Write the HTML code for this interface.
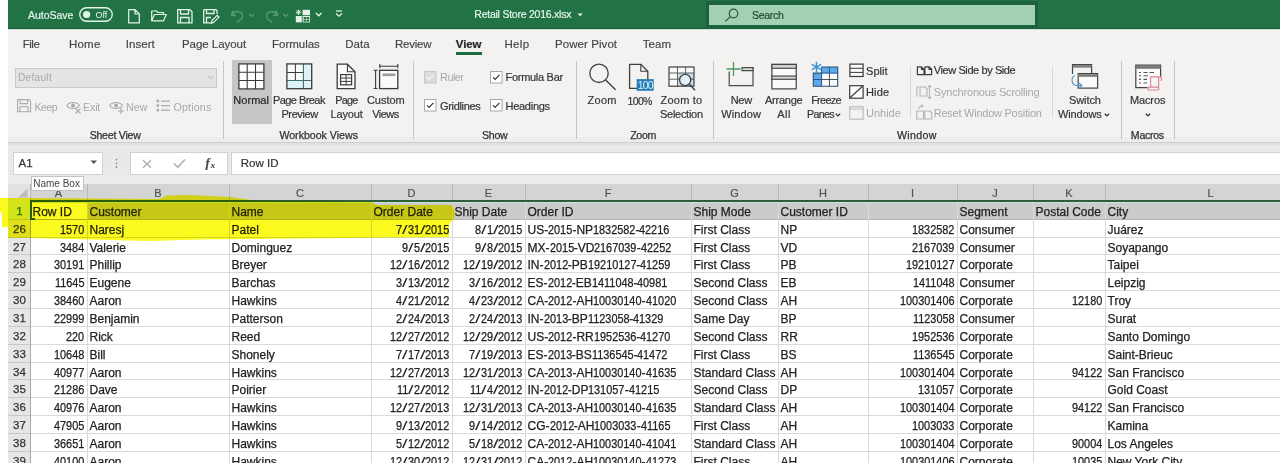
<!DOCTYPE html><html><head><meta charset="utf-8"><style>
html,body{margin:0;padding:0;}
body{width:1280px;height:463px;overflow:hidden;position:relative;background:#fff;font-family:"Liberation Sans", sans-serif;}
.t{position:absolute;white-space:pre;font-family:"Liberation Sans", sans-serif;}
svg{overflow:visible}
.d{display:inline-block;transform:scaleX(0.908);transform-origin:0 0;text-align:left}
.sl{display:inline-block;width:5.6px;transform:scaleX(1.65) scaleY(1.12);transform-origin:0 70%;text-align:left;-webkit-text-stroke:0 !important}
</style></head><body>
<div style="position:absolute;left:8px;top:0px;width:1272px;height:30px;background:#217346;"></div>
<div class="t" style="left:28.10px;top:10.11px;font-size:10.5px;line-height:10.5px;color:#e4f3e8;font-weight:normal;letter-spacing:-0.05px;-webkit-text-stroke:0.2px #e4f3e8;">AutoSave</div>
<svg style="position:absolute;left:79px;top:7px;" width="34" height="15" viewBox="0 0 34 15"><rect x="0.75" y="0.75" width="32.5" height="13.5" rx="6.75" fill="none" stroke="#e4f3e8" stroke-width="1.3"/><circle cx="7.6" cy="7.5" r="3.6" fill="#e4f3e8"/></svg>
<div class="t" style="left:95.50px;top:10.68px;font-size:9px;line-height:9px;color:#e4f3e8;font-weight:normal;">Off</div>
<svg style="position:absolute;left:128px;top:9px;" width="12" height="15" viewBox="0 0 12 15"><path d="M0.7 0.7 H7 L11.3 5 V13.8 H0.7 Z M7 0.7 V5 H11.3" fill="none" stroke="#e4f3e8" stroke-width="1.2"/></svg>
<svg style="position:absolute;left:151px;top:10px;" width="16" height="12" viewBox="0 0 16 12"><path d="M0.7 10.8 V1 H5.5 L7 2.5 H12.5 V4.5 M0.7 10.8 L3.5 4.5 H15.3 L12.5 10.8 Z" fill="none" stroke="#e4f3e8" stroke-width="1.2" stroke-linejoin="round"/></svg>
<svg style="position:absolute;left:177px;top:9px;" width="16" height="15" viewBox="0 0 16 15"><path d="M0.7 0.7 H13 L15 2.7 V13.8 H0.7 Z M3.5 0.7 V5 H11.5 V0.7 M3.5 13.8 V8.5 H12 V13.8" fill="none" stroke="#e4f3e8" stroke-width="1.3"/></svg>
<svg style="position:absolute;left:203px;top:9px;" width="16" height="15" viewBox="0 0 16 15"><path d="M0.7 0.7 H13 L14 1.7 V5 M8 13.8 H0.7 V0.7 M3.5 0.7 V4.5 H11 V0.7 M3.5 13.8 V8.5 H8" fill="none" stroke="#e4f3e8" stroke-width="1.3"/><path d="M8.5 14.3 L9 11.5 L14.2 6.3 L16 8.1 L10.8 13.3 Z" fill="none" stroke="#e4f3e8" stroke-width="1.2"/></svg>
<svg style="position:absolute;left:230px;top:9px;" width="14" height="14" viewBox="0 0 14 14"><path d="M1 6 L3.5 1.5 M1 6 L6 6.5 M1.5 5.5 C4 2.5 9.5 1.5 12 4.5 C13.5 7 12 10 9.5 11.5 L7 13.5" fill="none" stroke="#5f9b78" stroke-width="1.3"/></svg>
<svg style="position:absolute;left:248px;top:13px;" width="8" height="5" viewBox="0 0 8 5"><path d="M1 1 L3.5 3.5 L6 1" fill="none" stroke="#5f9b78" stroke-width="1.1"/></svg>
<svg style="position:absolute;left:265px;top:9px;" width="14" height="14" viewBox="0 0 14 14"><path d="M13 6 L10.5 1.5 M13 6 L8 6.5 M12.5 5.5 C10 2.5 4.5 1.5 2 4.5 C0.5 7 2 10 4.5 11.5 L7 13.5" fill="none" stroke="#5f9b78" stroke-width="1.3"/></svg>
<svg style="position:absolute;left:282px;top:13px;" width="8" height="5" viewBox="0 0 8 5"><path d="M1 1 L3.5 3.5 L6 1" fill="none" stroke="#5f9b78" stroke-width="1.1"/></svg>
<svg style="position:absolute;left:295px;top:9px;" width="16" height="14" viewBox="0 0 16 14"><rect x="7.6" y="0.8" width="7.4" height="5.4" fill="#e4f3e8"/><rect x="0.8" y="7" width="6" height="6.4" fill="#e4f3e8"/><rect x="7.6" y="7" width="7.4" height="6.4" fill="#e4f3e8"/><rect x="8.6" y="8" width="2.6" height="2.1" fill="#217346"/><rect x="11.6" y="8" width="2.6" height="2.1" fill="#217346"/><rect x="8.6" y="10.6" width="2.6" height="2.1" fill="#217346"/><rect x="11.6" y="10.6" width="2.6" height="2.1" fill="#217346"/><path d="M3.5 0.5 V6 M0.8 3.2 H6.2 M1.5 1.2 L5.5 5.2 M5.5 1.2 L1.5 5.2" stroke="#e4f3e8" stroke-width="0.9"/></svg>
<svg style="position:absolute;left:315px;top:12px;" width="8" height="5" viewBox="0 0 8 5"><path d="M1 1 L3.8 3.8 L6.6 1" fill="none" stroke="#e4f3e8" stroke-width="1.3"/></svg>
<svg style="position:absolute;left:335px;top:10px;" width="8" height="9" viewBox="0 0 8 9"><path d="M1 1 H7" stroke="#e4f3e8" stroke-width="1.2"/><path d="M1 3.5 L4 6.3 L7 3.5" fill="none" stroke="#e4f3e8" stroke-width="1.2"/></svg>
<div class="t" style="left:474.30px;top:9.41px;font-size:10.5px;line-height:10.5px;color:#e4f3e8;font-weight:normal;letter-spacing:-0.24px;-webkit-text-stroke:0.2px #e4f3e8;">Retail Store 2016.xlsx</div>
<svg style="position:absolute;left:577px;top:13px;" width="7" height="4" viewBox="0 0 7 4"><path d="M0.5 0.5 H5.8 L3.15 3.3 Z" fill="#e4f3e8"/></svg>
<div style="position:absolute;left:8px;top:28px;width:1272px;height:1px;background:#1a5a36;"></div>
<div style="position:absolute;left:8px;top:29px;width:1272px;height:1px;background:#cfe3d6;"></div>
<div style="position:absolute;left:706px;top:1px;width:332px;height:28px;background:#1c623a;"></div>
<div style="position:absolute;left:709px;top:5px;width:326px;height:20px;background:#a3d0b4;"></div>
<svg style="position:absolute;left:724px;top:8px;" width="16" height="14" viewBox="0 0 16 14"><circle cx="9.5" cy="5.5" r="4.3" fill="none" stroke="#2a5a3e" stroke-width="1.2"/><path d="M6.4 8.6 L1.3 13.4" stroke="#2a5a3e" stroke-width="1.3"/></svg>
<div class="t" style="left:752.00px;top:9.86px;font-size:10.5px;line-height:10.5px;color:#1a4a2f;font-weight:normal;letter-spacing:-0.31px;-webkit-text-stroke:0.2px #1a4a2f;">Search</div>
<div style="position:absolute;left:8px;top:30px;width:1272px;height:112px;background:#f3f2f1;"></div>
<div style="position:absolute;left:8px;top:137px;width:1272px;height:5px;background:#efeeed;"></div>
<div style="position:absolute;left:8px;top:142px;width:1272px;height:1px;background:#cdcdcd;"></div>
<div style="position:absolute;left:8px;top:143px;width:1272px;height:2px;background:#e2e2e2;"></div>
<div class="t" style="left:22.75px;top:38.77px;font-size:11.5px;line-height:11.5px;color:#444;font-weight:normal;letter-spacing:-0.49px;-webkit-text-stroke:0.15px #444;">File</div>
<div class="t" style="left:69.00px;top:38.77px;font-size:11.5px;line-height:11.5px;color:#444;font-weight:normal;letter-spacing:0.21px;-webkit-text-stroke:0.15px #444;">Home</div>
<div class="t" style="left:125.75px;top:38.77px;font-size:11.5px;line-height:11.5px;color:#444;font-weight:normal;letter-spacing:0.06px;-webkit-text-stroke:0.15px #444;">Insert</div>
<div class="t" style="left:182.00px;top:38.77px;font-size:11.5px;line-height:11.5px;color:#444;font-weight:normal;letter-spacing:-0.05px;-webkit-text-stroke:0.15px #444;">Page Layout</div>
<div class="t" style="left:272.00px;top:38.77px;font-size:11.5px;line-height:11.5px;color:#444;font-weight:normal;letter-spacing:-0.02px;-webkit-text-stroke:0.15px #444;">Formulas</div>
<div class="t" style="left:345.25px;top:38.77px;font-size:11.5px;line-height:11.5px;color:#444;font-weight:normal;letter-spacing:0.00px;-webkit-text-stroke:0.15px #444;">Data</div>
<div class="t" style="left:395.00px;top:38.77px;font-size:11.5px;line-height:11.5px;color:#444;font-weight:normal;letter-spacing:-0.23px;-webkit-text-stroke:0.15px #444;">Review</div>
<div class="t" style="left:504.50px;top:38.77px;font-size:11.5px;line-height:11.5px;color:#444;font-weight:normal;letter-spacing:0.30px;-webkit-text-stroke:0.15px #444;">Help</div>
<div class="t" style="left:555.00px;top:38.77px;font-size:11.5px;line-height:11.5px;color:#444;font-weight:normal;letter-spacing:0.07px;-webkit-text-stroke:0.15px #444;">Power Pivot</div>
<div class="t" style="left:642.75px;top:38.77px;font-size:11.5px;line-height:11.5px;color:#444;font-weight:normal;letter-spacing:0.06px;-webkit-text-stroke:0.15px #444;">Team</div>
<div class="t" style="left:455.75px;top:38.77px;font-size:11.5px;line-height:11.5px;color:#262626;font-weight:bold;letter-spacing:-0.07px;-webkit-text-stroke:0.2px #262626;">View</div>
<div style="position:absolute;left:456px;top:52px;width:26px;height:3px;background:#1d6b41;"></div>
<div style="position:absolute;left:223px;top:61px;width:1px;height:78px;background:#c8c6c4;"></div>
<div style="position:absolute;left:413px;top:61px;width:1px;height:78px;background:#c8c6c4;"></div>
<div style="position:absolute;left:576px;top:61px;width:1px;height:78px;background:#c8c6c4;"></div>
<div style="position:absolute;left:713px;top:61px;width:1px;height:78px;background:#c8c6c4;"></div>
<div style="position:absolute;left:1121px;top:61px;width:1px;height:78px;background:#c8c6c4;"></div>
<div style="position:absolute;left:1174px;top:61px;width:1px;height:78px;background:#c8c6c4;"></div>
<div style="position:absolute;left:910px;top:66px;width:1px;height:52px;background:#dcdad8;"></div>
<div style="position:absolute;left:1052px;top:66px;width:1px;height:52px;background:#dcdad8;"></div>
<div class="t" style="left:-184.92px;width:600px;text-align:center;top:130.23px;font-size:10.6px;line-height:10.6px;color:#333;font-weight:normal;letter-spacing:-0.25px;-webkit-text-stroke:0.25px #333;">Sheet View</div>
<div class="t" style="left:18.70px;width:600px;text-align:center;top:130.23px;font-size:10.6px;line-height:10.6px;color:#333;font-weight:normal;letter-spacing:-0.00px;-webkit-text-stroke:0.25px #333;">Workbook Views</div>
<div class="t" style="left:194.78px;width:600px;text-align:center;top:130.23px;font-size:10.6px;line-height:10.6px;color:#333;font-weight:normal;letter-spacing:-0.24px;-webkit-text-stroke:0.25px #333;">Show</div>
<div class="t" style="left:343.15px;width:600px;text-align:center;top:130.23px;font-size:10.6px;line-height:10.6px;color:#333;font-weight:normal;letter-spacing:-0.30px;-webkit-text-stroke:0.25px #333;">Zoom</div>
<div class="t" style="left:616.87px;width:600px;text-align:center;top:130.23px;font-size:10.6px;line-height:10.6px;color:#333;font-weight:normal;letter-spacing:0.34px;-webkit-text-stroke:0.25px #333;">Window</div>
<div class="t" style="left:847.35px;width:600px;text-align:center;top:130.23px;font-size:10.6px;line-height:10.6px;color:#333;font-weight:normal;letter-spacing:-0.29px;-webkit-text-stroke:0.25px #333;">Macros</div>
<div style="position:absolute;left:15px;top:68px;width:202px;height:20px;background:#c9c9c9;"></div>
<div style="position:absolute;left:16px;top:69px;width:200px;height:18px;background:#e4e4e4;"></div>
<div class="t" style="left:18.00px;top:73.07px;font-size:10.2px;line-height:10.2px;color:#a9a9a9;font-weight:normal;letter-spacing:0.25px;">Default</div>
<svg style="position:absolute;left:207px;top:75px;" width="8" height="5" viewBox="0 0 8 5"><path d="M1 1 L3.8 3.6 L6.6 1" fill="none" stroke="#b5b5b5" stroke-width="1"/></svg>
<svg style="position:absolute;left:17px;top:99px;" width="15" height="14" viewBox="0 0 15 14"><path d="M0.6 0.6 H12 L13.6 2.2 V12.8 H0.6 Z M3 0.6 V4.6 H10.6 V0.6 M3 12.8 V7.8 H11 V12.8" fill="none" stroke="#ababab" stroke-width="1.1"/></svg>
<div class="t" style="left:34.50px;top:101.53px;font-size:10.6px;line-height:10.6px;color:#a8a8a8;font-weight:normal;letter-spacing:-0.52px;">Keep</div>
<svg style="position:absolute;left:66px;top:100px;" width="16" height="14" viewBox="0 0 16 14"><path d="M0.8 5.5 C3 1.5 10.5 1.5 13.5 5.5 C10.5 9.5 3 9.5 0.8 5.5 Z" fill="none" stroke="#ababab" stroke-width="1.1"/><circle cx="7" cy="5.5" r="2" fill="#ababab"/><path d="M9.5 8.5 L14.5 13.5 M14.5 8.5 L9.5 13.5" stroke="#ababab" stroke-width="1.1"/></svg>
<div class="t" style="left:83.10px;top:101.53px;font-size:10.6px;line-height:10.6px;color:#a8a8a8;font-weight:normal;letter-spacing:-0.16px;">Exit</div>
<svg style="position:absolute;left:109px;top:100px;" width="16" height="14" viewBox="0 0 16 14"><path d="M0.8 5.5 C3 1.5 10.5 1.5 13.5 5.5 C10.5 9.5 3 9.5 0.8 5.5 Z" fill="none" stroke="#ababab" stroke-width="1.1"/><circle cx="7" cy="5.5" r="2" fill="#ababab"/><path d="M12 8 V14 M9 11 H15" stroke="#ababab" stroke-width="1.1"/></svg>
<div class="t" style="left:125.90px;top:101.53px;font-size:10.6px;line-height:10.6px;color:#a8a8a8;font-weight:normal;letter-spacing:0.15px;">New</div>
<svg style="position:absolute;left:156px;top:99px;" width="15" height="14" viewBox="0 0 15 14"><rect x="0.5" y="0.8" width="2.6" height="2.6" fill="#ababab"/><rect x="0.5" y="5.3" width="2.6" height="2.6" fill="#ababab"/><rect x="0.5" y="9.8" width="2.6" height="2.6" fill="#ababab"/><path d="M5 2.1 H14 M5 6.6 H14 M5 11.1 H14" stroke="#ababab" stroke-width="1.2"/></svg>
<div class="t" style="left:173.50px;top:101.53px;font-size:10.6px;line-height:10.6px;color:#a8a8a8;font-weight:normal;letter-spacing:0.21px;">Options</div>
<div style="position:absolute;left:232px;top:60px;width:40px;height:64px;background:#c6c6c6;"></div>
<svg style="position:absolute;left:238px;top:63px;" width="27" height="27" viewBox="0 0 27 27"><rect x="0.9" y="0.9" width="25" height="25" fill="#fff" stroke="#3b3b3b" stroke-width="1.3"/><path d="M9.2 0.9 V25.9 M17.5 0.9 V25.9 M0.9 9.2 H25.9 M0.9 17.5 H25.9" stroke="#3b3b3b" stroke-width="1.1"/></svg>
<div class="t" style="left:-48.86px;width:600px;text-align:center;top:95.09px;font-size:11px;line-height:11px;color:#262626;font-weight:normal;letter-spacing:0.07px;-webkit-text-stroke:0.2px #262626;">Normal</div>
<svg style="position:absolute;left:286px;top:63px;" width="27" height="27" viewBox="0 0 27 27"><rect x="0.9" y="0.9" width="24.8" height="24.8" fill="#fafafa"/><rect x="0.9" y="17.5" width="24.8" height="8.2" fill="#dff3f7"/><rect x="17.4" y="0.9" width="8.3" height="24.8" fill="#dff3f7"/><path d="M0.9 17.5 H25.7 M17.4 0.9 V25.7" stroke="#3f6f73" stroke-width="1.1"/><path d="M9.4 0.9 V17.5 M0.9 9.5 H17.4" stroke="#3b3b3b" stroke-width="1"/><rect x="0.9" y="0.9" width="24.8" height="24.8" fill="none" stroke="#3b3b3b" stroke-width="1.3"/></svg>
<div class="t" style="left:-1.08px;width:600px;text-align:center;top:95.09px;font-size:11px;line-height:11px;color:#363636;font-weight:normal;letter-spacing:-0.56px;-webkit-text-stroke:0.2px #363636;">Page Break</div>
<div class="t" style="left:-0.39px;width:600px;text-align:center;top:108.59px;font-size:11px;line-height:11px;color:#363636;font-weight:normal;letter-spacing:-0.39px;-webkit-text-stroke:0.2px #363636;">Preview</div>
<svg style="position:absolute;left:336px;top:63px;" width="21" height="27" viewBox="0 0 21 27"><path d="M1.2 1.2 H11.4 L19 8.8 V25.7 H1.2 Z" fill="#fafafa" stroke="#3b3b3b" stroke-width="1.3"/><path d="M11.4 1.2 V8.8 H19" fill="none" stroke="#3b3b3b" stroke-width="1.1"/><rect x="4.6" y="11.6" width="11" height="10.2" fill="#fff" stroke="#3b3b3b" stroke-width="1.2"/><path d="M4.6 15 H15.6 M4.6 18.4 H15.6 M10.1 11.6 V21.8" stroke="#3b3b3b" stroke-width="1"/></svg>
<div class="t" style="left:46.45px;width:600px;text-align:center;top:95.23px;font-size:10.832943065498092px;line-height:10.832943065498092px;color:#363636;font-weight:normal;letter-spacing:-0.70px;-webkit-text-stroke:0.2px #363636;">Page</div>
<div class="t" style="left:46.65px;width:600px;text-align:center;top:108.59px;font-size:11px;line-height:11px;color:#363636;font-weight:normal;letter-spacing:-0.11px;-webkit-text-stroke:0.2px #363636;">Layout</div>
<svg style="position:absolute;left:372px;top:63px;" width="28" height="27" viewBox="0 0 28 27"><path d="M3.6 7.3 V25.5 M1.6 7.3 H5.6 M1.6 25.5 H5.6" stroke="#3b3b3b" stroke-width="1.1"/><path d="M7.8 1 V5.3 M25.8 1 V5.3 M7.8 3.2 H25.8" stroke="#3b3b3b" stroke-width="1.1"/><rect x="7.6" y="7.3" width="18.2" height="18.3" fill="#fafafa" stroke="#3b3b3b" stroke-width="1.3"/><rect x="10.5" y="10.5" width="12.8" height="2.6" fill="#9c9c9c"/></svg>
<div class="t" style="left:85.79px;width:600px;text-align:center;top:95.09px;font-size:11px;line-height:11px;color:#363636;font-weight:normal;letter-spacing:-0.02px;-webkit-text-stroke:0.2px #363636;">Custom</div>
<div class="t" style="left:85.43px;width:600px;text-align:center;top:108.59px;font-size:11px;line-height:11px;color:#363636;font-weight:normal;letter-spacing:-0.54px;-webkit-text-stroke:0.2px #363636;">Views</div>
<svg style="position:absolute;left:424px;top:71px;" width="13" height="13" viewBox="0 0 13 13"><rect x="0.5" y="0.5" width="11.5" height="11.5" fill="#dcdcdc" stroke="#c6c6c6" stroke-width="1"/><path d="M2.8 6.2 L5 8.5 L9.6 3.6" fill="none" stroke="#f4f4f4" stroke-width="1.3"/></svg>
<div class="t" style="left:440.10px;top:72.39px;font-size:11px;line-height:11px;color:#a8a8a8;font-weight:normal;letter-spacing:-0.60px;">Ruler</div>
<svg style="position:absolute;left:490px;top:71px;" width="13" height="13" viewBox="0 0 13 13"><rect x="0.5" y="0.5" width="11.5" height="11.5" fill="#fff" stroke="#a8a8a8" stroke-width="1"/><path d="M3 6.3 L5.1 8.4 L9.4 3.9" fill="none" stroke="#333" stroke-width="1.2"/></svg>
<div class="t" style="left:505.50px;top:72.39px;font-size:11px;line-height:11px;color:#363636;font-weight:normal;letter-spacing:-0.29px;-webkit-text-stroke:0.2px #363636;">Formula Bar</div>
<svg style="position:absolute;left:424px;top:99px;" width="13" height="13" viewBox="0 0 13 13"><rect x="0.5" y="0.5" width="11.5" height="11.5" fill="#fff" stroke="#a8a8a8" stroke-width="1"/><path d="M3 6.3 L5.1 8.4 L9.4 3.9" fill="none" stroke="#333" stroke-width="1.2"/></svg>
<div class="t" style="left:440.10px;top:100.89px;font-size:11px;line-height:11px;color:#363636;font-weight:normal;letter-spacing:-0.35px;-webkit-text-stroke:0.2px #363636;">Gridlines</div>
<svg style="position:absolute;left:490px;top:99px;" width="13" height="13" viewBox="0 0 13 13"><rect x="0.5" y="0.5" width="11.5" height="11.5" fill="#fff" stroke="#a8a8a8" stroke-width="1"/><path d="M3 6.3 L5.1 8.4 L9.4 3.9" fill="none" stroke="#333" stroke-width="1.2"/></svg>
<div class="t" style="left:505.50px;top:100.89px;font-size:11px;line-height:11px;color:#363636;font-weight:normal;letter-spacing:-0.27px;-webkit-text-stroke:0.2px #363636;">Headings</div>
<svg style="position:absolute;left:588px;top:63px;" width="29" height="28" viewBox="0 0 29 28"><circle cx="11" cy="10.3" r="9.2" fill="none" stroke="#404040" stroke-width="1.3"/><path d="M17.6 17 L27.6 26.8" stroke="#404040" stroke-width="1.4"/></svg>
<div class="t" style="left:302.13px;width:600px;text-align:center;top:95.09px;font-size:11px;line-height:11px;color:#363636;font-weight:normal;letter-spacing:0.26px;-webkit-text-stroke:0.2px #363636;">Zoom</div>
<svg style="position:absolute;left:628px;top:63px;" width="27" height="28" viewBox="0 0 27 28"><path d="M1.6 1.3 H12.8 L19.8 8.3 V25.3 H1.6 Z" fill="none" stroke="#404040" stroke-width="1.3"/><path d="M12.8 1.3 V8.3 H19.8" fill="none" stroke="#404040" stroke-width="1.1"/><rect x="8.7" y="16.1" width="17" height="11.7" fill="#2b7db6"/><text x="17.2" y="25.8" font-family="Liberation Sans" font-size="10.5" fill="#d2f1ff" text-anchor="middle" letter-spacing="-0.8">100</text></svg>
<div class="t" style="left:339.65px;width:600px;text-align:center;top:95.50px;font-size:10.517570011240897px;line-height:10.517570011240897px;color:#363636;font-weight:normal;letter-spacing:-0.70px;-webkit-text-stroke:0.2px #363636;">100%</div>
<svg style="position:absolute;left:668px;top:66px;" width="28" height="26" viewBox="0 0 28 26"><rect x="1" y="1" width="25" height="19.2" fill="#fafafa"/><rect x="9.5" y="7" width="16.5" height="13.2" fill="#c6ddef"/><path d="M1 7 H26 M1 13.2 H26 M9.5 1 V20.2 M17.6 1 V20.2" stroke="#505050" stroke-width="0.9"/><rect x="1" y="1" width="25" height="19.2" fill="none" stroke="#404040" stroke-width="1.2"/><circle cx="17.2" cy="14" r="5.6" fill="#e4eff8" stroke="#404040" stroke-width="1.3"/><path d="M21.2 18 L27 24.2" stroke="#404040" stroke-width="1.4"/></svg>
<div class="t" style="left:381.50px;width:600px;text-align:center;top:95.09px;font-size:11px;line-height:11px;color:#363636;font-weight:normal;letter-spacing:0.21px;-webkit-text-stroke:0.2px #363636;">Zoom to</div>
<div class="t" style="left:381.36px;width:600px;text-align:center;top:108.59px;font-size:11px;line-height:11px;color:#363636;font-weight:normal;letter-spacing:-0.28px;-webkit-text-stroke:0.2px #363636;">Selection</div>
<svg style="position:absolute;left:726px;top:61px;" width="29" height="27" viewBox="0 0 29 27"><path d="M3.2 10.5 V24.6 H27 V6.6 H16" fill="none" stroke="#4a4a4a" stroke-width="1.2"/><path d="M16 6.6 H27 V9.6 H16 Z" fill="#dcdcdc" stroke="#4a4a4a" stroke-width="1.1"/><path d="M7.5 1 V15 M0.5 8 H14.5" stroke="#4f9a60" stroke-width="1.3"/></svg>
<div class="t" style="left:441.27px;width:600px;text-align:center;top:95.09px;font-size:11px;line-height:11px;color:#363636;font-weight:normal;letter-spacing:-0.25px;-webkit-text-stroke:0.2px #363636;">New</div>
<div class="t" style="left:441.06px;width:600px;text-align:center;top:108.59px;font-size:11px;line-height:11px;color:#363636;font-weight:normal;letter-spacing:0.12px;-webkit-text-stroke:0.2px #363636;">Window</div>
<svg style="position:absolute;left:771px;top:63px;" width="26" height="27" viewBox="0 0 26 27"><rect x="0.9" y="1.4" width="24.3" height="24.5" fill="#fafafa" stroke="#404040" stroke-width="1.2"/><rect x="0.9" y="1.4" width="24.3" height="3.9" fill="#d0d0d0" stroke="#404040" stroke-width="1.1"/><rect x="0.9" y="13" width="24.3" height="3.3" fill="#d0d0d0" stroke="#404040" stroke-width="1.1"/></svg>
<div class="t" style="left:483.73px;width:600px;text-align:center;top:95.09px;font-size:11px;line-height:11px;color:#363636;font-weight:normal;letter-spacing:-0.24px;-webkit-text-stroke:0.2px #363636;">Arrange</div>
<div class="t" style="left:484.04px;width:600px;text-align:center;top:108.59px;font-size:11px;line-height:11px;color:#363636;font-weight:normal;letter-spacing:0.49px;-webkit-text-stroke:0.2px #363636;">All</div>
<svg style="position:absolute;left:810px;top:61px;" width="30" height="27" viewBox="0 0 30 27"><rect x="3.3" y="12.1" width="24.4" height="13.2" fill="#fafafa"/><rect x="11.6" y="6" width="16.1" height="6.1" fill="#5ea9e6"/><rect x="3.3" y="12.1" width="8.3" height="13.2" fill="#5ea9e6"/><path d="M3.3 18.5 H27.7 M19.4 12.1 V25.3" stroke="#3d3d3d" stroke-width="0.9"/><path d="M11.6 12.1 H27.7 M11.6 6 V25.3 M19.4 6 V12.1 M3.3 18.5 H11.6" stroke="#1d5a96" stroke-width="1"/><path d="M11.6 6 H27.7 V25.3 H3.3 V12.1 H11.6" fill="none" stroke="#2a4f74" stroke-width="1.1"/><path d="M6.5 0.8 V11.2 M1.8 3.4 L11.2 8.6 M1.8 8.6 L11.2 3.4" stroke="#3a94d6" stroke-width="1.5"/></svg>
<div class="t" style="left:526.00px;width:600px;text-align:center;top:95.15px;font-size:10.924298028505591px;line-height:10.924298028505591px;color:#363636;font-weight:normal;letter-spacing:-0.70px;-webkit-text-stroke:0.2px #363636;">Freeze</div>
<div class="t" style="left:807.10px;top:108.82px;font-size:10.72133134953436px;line-height:10.72133134953436px;color:#363636;font-weight:normal;letter-spacing:-0.70px;-webkit-text-stroke:0.2px #363636;">Panes</div>
<svg style="position:absolute;left:835px;top:113px;" width="6" height="4" viewBox="0 0 6 4"><path d="M0.7 0.7 L2.9 2.9 L5.1 0.7" fill="none" stroke="#363636" stroke-width="1.3"/></svg>
<svg style="position:absolute;left:849px;top:63px;" width="15" height="14" viewBox="0 0 15 14"><rect x="0.9" y="1.1" width="13.2" height="12.4" fill="#fafafa" stroke="#3b3b3b" stroke-width="1.2"/><path d="M0.9 5.3 H14 M0.9 9.4 H14" stroke="#3b3b3b" stroke-width="1"/></svg>
<div class="t" style="left:866.00px;top:65.79px;font-size:11px;line-height:11px;color:#363636;font-weight:normal;letter-spacing:0.05px;-webkit-text-stroke:0.2px #363636;">Split</div>
<svg style="position:absolute;left:849px;top:85px;" width="15" height="14" viewBox="0 0 15 14"><rect x="0.7" y="0.7" width="13.4" height="12.5" fill="#fff" stroke="#3b3b3b" stroke-width="1.2"/><path d="M1 12.8 L13.8 1" stroke="#3b3b3b" stroke-width="1.2"/></svg>
<div class="t" style="left:866.00px;top:86.59px;font-size:11px;line-height:11px;color:#363636;font-weight:normal;letter-spacing:0.16px;-webkit-text-stroke:0.2px #363636;">Hide</div>
<svg style="position:absolute;left:849px;top:106px;" width="15" height="14" viewBox="0 0 15 14"><rect x="0.7" y="0.7" width="13.4" height="12.5" fill="#f3f3f3" stroke="#bdbdbd" stroke-width="1.2"/><path d="M0.7 3 H14" stroke="#bdbdbd" stroke-width="1"/></svg>
<div class="t" style="left:866.00px;top:107.99px;font-size:11px;line-height:11px;color:#a8a8a8;font-weight:normal;letter-spacing:-0.01px;">Unhide</div>
<svg style="position:absolute;left:916px;top:66px;" width="17" height="10" viewBox="0 0 17 10"><path d="M1.4 0.8 H5.5 L8 3.3 V8.6 H1.4 Z M8.9 0.8 H13 L15.6 3.3 V8.6 H8.9 Z M5.5 0.8 V3.3 H8 M13 0.8 V3.3 H15.6" fill="none" stroke="#3b3b3b" stroke-width="1.2" stroke-linejoin="round"/></svg>
<div class="t" style="left:933.80px;top:65.19px;font-size:11px;line-height:11px;color:#363636;font-weight:normal;letter-spacing:-0.41px;-webkit-text-stroke:0.2px #363636;">View Side by Side</div>
<svg style="position:absolute;left:916px;top:85px;" width="17" height="15" viewBox="0 0 17 15"><path d="M0.8 1.5 V11.5 M0.8 2 H3 M4 2 H9 L11 4 V11 H4 Z M13.5 0.5 V13.5 M11.8 2.2 L13.5 0.5 L15.2 2.2 M11.8 11.8 L13.5 13.5 L15.2 11.8" fill="none" stroke="#b5b5b5" stroke-width="1.1"/></svg>
<div class="t" style="left:933.80px;top:86.59px;font-size:11px;line-height:11px;color:#a8a8a8;font-weight:normal;letter-spacing:-0.18px;">Synchronous Scrolling</div>
<svg style="position:absolute;left:916px;top:105px;" width="17" height="15" viewBox="0 0 17 15"><path d="M0.8 6 V14 H7.5 V6 Z M8.8 6 V14 H15.8 V8 L13.8 6 Z M3 4 C3 1.5 5 0.8 7 0.8 M5.5 -0.5 L7 0.8 L5.5 2.3" fill="none" stroke="#b5b5b5" stroke-width="1.1"/></svg>
<div class="t" style="left:933.80px;top:107.99px;font-size:11px;line-height:11px;color:#a8a8a8;font-weight:normal;letter-spacing:-0.25px;">Reset Window Position</div>
<svg style="position:absolute;left:1071px;top:63px;" width="28" height="28" viewBox="0 0 28 28"><path d="M1.5 11 V1.6 H20.6 V10" fill="none" stroke="#444" stroke-width="1.2"/><rect x="1.5" y="2.2" width="19.1" height="2.4" fill="#7a7a7a"/><rect x="7.2" y="10.6" width="19.4" height="14.5" fill="#fafafa" stroke="#444" stroke-width="1.2"/><rect x="7.2" y="11.2" width="19.4" height="2.6" fill="#7a7a7a"/><path d="M3.6 12.5 C-0.5 15 0.5 22 6 22.6 L10.5 22.6 M8 19.8 L10.8 22.6 L8 25.4" fill="none" stroke="#5a9ccc" stroke-width="1.2"/></svg>
<div class="t" style="left:784.95px;width:600px;text-align:center;top:95.09px;font-size:11px;line-height:11px;color:#363636;font-weight:normal;letter-spacing:-0.10px;-webkit-text-stroke:0.2px #363636;">Switch</div>
<div class="t" style="left:1058.00px;top:108.59px;font-size:11px;line-height:11px;color:#363636;font-weight:normal;letter-spacing:-0.14px;-webkit-text-stroke:0.2px #363636;">Windows</div>
<svg style="position:absolute;left:1104px;top:113px;" width="6" height="4" viewBox="0 0 6 4"><path d="M0.7 0.7 L2.9 2.9 L5.1 0.7" fill="none" stroke="#363636" stroke-width="1.3"/></svg>
<svg style="position:absolute;left:1134px;top:64px;" width="30" height="28" viewBox="0 0 30 28"><path d="M13.5 23.6 H1.8 V1.2 H26.6 V13" fill="#fafafa" stroke="#444" stroke-width="1.2"/><rect x="1.8" y="1.8" width="24.8" height="3" fill="#7a7a7a"/><path d="M5 8.5 H7 M9.5 8.5 H13.5 M15.5 8.5 H20 M5 11.8 H7 M9.5 11.8 H14 M5 15.4 H7 M9.5 15.4 H13 M5 19 H7 M9.5 19 H13" stroke="#555" stroke-width="1.1"/><path d="M16.6 12.8 H25.8 C27.8 12.8 28.4 15.8 26.4 16.6 M16.6 12.8 V23 M24.6 13 V23.5 M14.5 23.2 H24 C25.2 23.2 25.2 26 24 26 H15 C13.8 26 13.8 23.2 14.5 23.2" fill="#f7eef0" stroke="#d98a9b" stroke-width="1.2"/></svg>
<div class="t" style="left:847.63px;width:600px;text-align:center;top:95.09px;font-size:11px;line-height:11px;color:#363636;font-weight:normal;letter-spacing:-0.13px;-webkit-text-stroke:0.2px #363636;">Macros</div>
<svg style="position:absolute;left:1145px;top:113px;" width="6" height="4" viewBox="0 0 6 4"><path d="M0.7 0.7 L2.9 2.9 L5.1 0.7" fill="none" stroke="#363636" stroke-width="1.3"/></svg>
<div style="position:absolute;left:8px;top:145px;width:1272px;height:39px;background:#e9e9e9;"></div>
<div style="position:absolute;left:8px;top:175px;width:1272px;height:9px;background:#ececec;"></div>
<div style="position:absolute;left:13px;top:152px;width:90px;height:23px;background:#d2d2d2;"></div>
<div style="position:absolute;left:14px;top:153px;width:88px;height:21px;background:#fff;"></div>
<div class="t" style="left:18.50px;top:158.27px;font-size:11.5px;line-height:11.5px;color:#333;font-weight:normal;-webkit-text-stroke:0.25px #333;">A1</div>
<svg style="position:absolute;left:90px;top:160px;" width="8" height="5" viewBox="0 0 8 5"><path d="M0.5 0.5 H7 L3.75 4 Z" fill="#555"/></svg>
<svg style="position:absolute;left:114px;top:157px;" width="5" height="12" viewBox="0 0 5 12"><circle cx="2.5" cy="2.6" r="0.9" fill="#8c8c8c"/><circle cx="2.5" cy="6.3" r="0.9" fill="#8c8c8c"/><circle cx="2.5" cy="10" r="0.9" fill="#8c8c8c"/></svg>
<div style="position:absolute;left:130px;top:152px;width:98px;height:23px;background:#d0d0d0;"></div>
<div style="position:absolute;left:131px;top:153px;width:96px;height:21px;background:#fff;"></div>
<svg style="position:absolute;left:142px;top:159px;" width="10" height="10" viewBox="0 0 10 10"><path d="M1 1.2 L9 8.8 M9 1.2 L1 8.8" stroke="#b0b0b0" stroke-width="1.4"/></svg>
<svg style="position:absolute;left:173px;top:158px;" width="13" height="11" viewBox="0 0 13 11"><path d="M1 5.5 L4.8 9.3 L12 1.5" fill="none" stroke="#b4b4b4" stroke-width="1.7"/></svg>
<div class="t" style="left:205.50px;top:156.92px;font-size:12.5px;line-height:12.5px;color:#444;font-weight:bold;font-style:italic;font-family:'Liberation Serif',serif;-webkit-text-stroke:0.15px #444;">f</div>
<div class="t" style="left:210.70px;top:160.60px;font-size:8.5px;line-height:8.5px;color:#444;font-weight:bold;font-style:italic;font-family:'Liberation Serif',serif;-webkit-text-stroke:0.15px #444;">x</div>
<div style="position:absolute;left:231px;top:152px;width:1049px;height:23px;background:#d0d0d0;"></div>
<div style="position:absolute;left:232px;top:153px;width:1048px;height:21px;background:#fff;"></div>
<div class="t" style="left:240.75px;top:158.27px;font-size:11.5px;line-height:11.5px;color:#333;font-weight:normal;-webkit-text-stroke:0.2px #333;">Row ID</div>
<div style="position:absolute;left:8px;top:184px;width:1272px;height:16px;background:#e1e1e1;"></div>
<div style="position:absolute;left:30px;top:184px;width:1250px;height:16px;background:#d4d4d4;"></div>
<div class="t" style="left:-241.50px;width:600px;text-align:center;top:187.69px;font-size:11px;line-height:11px;color:#46584c;font-weight:normal;-webkit-text-stroke:0.2px #46584c;">A</div>
<div class="t" style="left:-142.00px;width:600px;text-align:center;top:187.69px;font-size:11px;line-height:11px;color:#46584c;font-weight:normal;-webkit-text-stroke:0.2px #46584c;">B</div>
<div class="t" style="left:0.00px;width:600px;text-align:center;top:187.69px;font-size:11px;line-height:11px;color:#46584c;font-weight:normal;-webkit-text-stroke:0.2px #46584c;">C</div>
<div class="t" style="left:111.50px;width:600px;text-align:center;top:187.69px;font-size:11px;line-height:11px;color:#46584c;font-weight:normal;-webkit-text-stroke:0.2px #46584c;">D</div>
<div class="t" style="left:188.50px;width:600px;text-align:center;top:187.69px;font-size:11px;line-height:11px;color:#46584c;font-weight:normal;-webkit-text-stroke:0.2px #46584c;">E</div>
<div class="t" style="left:308.00px;width:600px;text-align:center;top:187.69px;font-size:11px;line-height:11px;color:#46584c;font-weight:normal;-webkit-text-stroke:0.2px #46584c;">F</div>
<div class="t" style="left:434.50px;width:600px;text-align:center;top:187.69px;font-size:11px;line-height:11px;color:#46584c;font-weight:normal;-webkit-text-stroke:0.2px #46584c;">G</div>
<div class="t" style="left:523.00px;width:600px;text-align:center;top:187.69px;font-size:11px;line-height:11px;color:#46584c;font-weight:normal;-webkit-text-stroke:0.2px #46584c;">H</div>
<div class="t" style="left:612.50px;width:600px;text-align:center;top:187.69px;font-size:11px;line-height:11px;color:#46584c;font-weight:normal;-webkit-text-stroke:0.2px #46584c;">I</div>
<div class="t" style="left:695.00px;width:600px;text-align:center;top:187.69px;font-size:11px;line-height:11px;color:#46584c;font-weight:normal;-webkit-text-stroke:0.2px #46584c;">J</div>
<div class="t" style="left:769.00px;width:600px;text-align:center;top:187.69px;font-size:11px;line-height:11px;color:#46584c;font-weight:normal;-webkit-text-stroke:0.2px #46584c;">K</div>
<div class="t" style="left:910.50px;width:600px;text-align:center;top:187.69px;font-size:11px;line-height:11px;color:#46584c;font-weight:normal;-webkit-text-stroke:0.2px #46584c;">L</div>
<div style="position:absolute;left:87px;top:184px;width:1px;height:16px;background:#b9b9b9;"></div>
<div style="position:absolute;left:229px;top:184px;width:1px;height:16px;background:#b9b9b9;"></div>
<div style="position:absolute;left:371px;top:184px;width:1px;height:16px;background:#b9b9b9;"></div>
<div style="position:absolute;left:452px;top:184px;width:1px;height:16px;background:#b9b9b9;"></div>
<div style="position:absolute;left:525px;top:184px;width:1px;height:16px;background:#b9b9b9;"></div>
<div style="position:absolute;left:691px;top:184px;width:1px;height:16px;background:#b9b9b9;"></div>
<div style="position:absolute;left:778px;top:184px;width:1px;height:16px;background:#b9b9b9;"></div>
<div style="position:absolute;left:868px;top:184px;width:1px;height:16px;background:#b9b9b9;"></div>
<div style="position:absolute;left:957px;top:184px;width:1px;height:16px;background:#b9b9b9;"></div>
<div style="position:absolute;left:1033px;top:184px;width:1px;height:16px;background:#b9b9b9;"></div>
<div style="position:absolute;left:1105px;top:184px;width:1px;height:16px;background:#b9b9b9;"></div>
<svg style="position:absolute;left:8px;top:184px;" width="22" height="16" viewBox="0 0 22 16"><path d="M19.6 4.6 V13.6 H10 Z" fill="#bdbdbd"/></svg>
<div style="position:absolute;left:30px;top:184px;width:1px;height:16px;background:#b9b9b9;"></div>
<div style="position:absolute;left:8px;top:200px;width:22px;height:263px;background:#e6e6e6;"></div>
<div style="position:absolute;left:87px;top:202px;width:1193px;height:17px;background:#cbcbcb;"></div>
<div style="position:absolute;left:8px;top:201px;width:22px;height:18px;background:#d6ead6;"></div>
<div style="position:absolute;left:8px;top:219px;width:22px;height:1px;background:#c9c9c9;"></div>
<div style="position:absolute;left:30px;top:219px;width:1250px;height:1px;background:#b4b4b4;"></div>
<div class="t" style="left:-280.50px;width:600px;text-align:center;top:206.27px;font-size:11.5px;line-height:11.5px;color:#2e6e48;font-weight:normal;-webkit-text-stroke:0.25px #2e6e48;">1</div>
<div class="t" style="left:32.50px;top:206.14px;font-size:12px;line-height:12px;color:#222;font-weight:normal;-webkit-text-stroke:0.25px #222;">Row ID</div>
<div class="t" style="left:89.50px;top:206.14px;font-size:12px;line-height:12px;color:#222;font-weight:normal;-webkit-text-stroke:0.25px #222;">Customer</div>
<div class="t" style="left:231.50px;top:206.14px;font-size:12px;line-height:12px;color:#222;font-weight:normal;-webkit-text-stroke:0.25px #222;">Name</div>
<div class="t" style="left:373.50px;top:206.14px;font-size:12px;line-height:12px;color:#222;font-weight:normal;-webkit-text-stroke:0.25px #222;">Order Date</div>
<div class="t" style="left:454.50px;top:206.14px;font-size:12px;line-height:12px;color:#222;font-weight:normal;-webkit-text-stroke:0.25px #222;">Ship Date</div>
<div class="t" style="left:527.50px;top:206.14px;font-size:12px;line-height:12px;color:#222;font-weight:normal;-webkit-text-stroke:0.25px #222;">Order ID</div>
<div class="t" style="left:693.50px;top:206.14px;font-size:12px;line-height:12px;color:#222;font-weight:normal;-webkit-text-stroke:0.25px #222;">Ship Mode</div>
<div class="t" style="left:780.50px;top:206.14px;font-size:12px;line-height:12px;color:#222;font-weight:normal;-webkit-text-stroke:0.25px #222;">Customer ID</div>
<div class="t" style="left:959.50px;top:206.14px;font-size:12px;line-height:12px;color:#222;font-weight:normal;-webkit-text-stroke:0.25px #222;">Segment</div>
<div class="t" style="left:1035.50px;top:206.14px;font-size:12px;line-height:12px;color:#222;font-weight:normal;-webkit-text-stroke:0.25px #222;">Postal Code</div>
<div class="t" style="left:1107.50px;top:206.14px;font-size:12px;line-height:12px;color:#222;font-weight:normal;-webkit-text-stroke:0.25px #222;">City</div>
<div style="position:absolute;left:8px;top:237px;width:22px;height:1px;background:#c9c9c9;"></div>
<div style="position:absolute;left:30px;top:237px;width:1250px;height:1px;background:#d9d9d9;"></div>
<div class="t" style="left:-280.50px;width:600px;text-align:center;top:224.27px;font-size:11.5px;line-height:11.5px;color:#333;font-weight:normal;-webkit-text-stroke:0.25px #333;">26</div>
<div class="t" style="left:-515.50px;width:600px;text-align:right;top:224.14px;font-size:12px;line-height:12px;color:#222;font-weight:normal;-webkit-text-stroke:0.25px #222;"><span class="d" style="width:24.24px">1570</span></div>
<div class="t" style="left:89.50px;top:224.14px;font-size:12px;line-height:12px;color:#222;font-weight:normal;-webkit-text-stroke:0.25px #222;">Naresj</div>
<div class="t" style="left:231.50px;top:224.14px;font-size:12px;line-height:12px;color:#222;font-weight:normal;-webkit-text-stroke:0.25px #222;">Patel</div>
<div class="t" style="left:-150.50px;width:600px;text-align:right;top:224.14px;font-size:12px;line-height:12px;color:#222;font-weight:normal;-webkit-text-stroke:0.25px #222;"><span class="d" style="width:6.06px">7</span><span class="sl">/</span><span class="d" style="width:12.12px">31</span><span class="sl">/</span><span class="d" style="width:24.24px">2015</span></div>
<div class="t" style="left:-77.50px;width:600px;text-align:right;top:224.14px;font-size:12px;line-height:12px;color:#222;font-weight:normal;-webkit-text-stroke:0.25px #222;"><span class="d" style="width:6.06px">8</span><span class="sl">/</span><span class="d" style="width:6.06px">1</span><span class="sl">/</span><span class="d" style="width:24.24px">2015</span></div>
<div class="t" style="left:527.50px;top:224.14px;font-size:12px;line-height:12px;color:#222;font-weight:normal;-webkit-text-stroke:0.25px #222;">US-<span class="d" style="width:24.24px">2015</span>-NP<span class="d" style="width:42.42px">1832582</span>-<span class="d" style="width:30.30px">42216</span></div>
<div class="t" style="left:693.50px;top:224.14px;font-size:12px;line-height:12px;color:#222;font-weight:normal;-webkit-text-stroke:0.25px #222;">First Class</div>
<div class="t" style="left:780.50px;top:224.14px;font-size:12px;line-height:12px;color:#222;font-weight:normal;-webkit-text-stroke:0.25px #222;">NP</div>
<div class="t" style="left:354.50px;width:600px;text-align:right;top:224.14px;font-size:12px;line-height:12px;color:#222;font-weight:normal;-webkit-text-stroke:0.25px #222;"><span class="d" style="width:42.42px">1832582</span></div>
<div class="t" style="left:959.50px;top:224.14px;font-size:12px;line-height:12px;color:#222;font-weight:normal;-webkit-text-stroke:0.25px #222;">Consumer</div>
<div class="t" style="left:1107.50px;top:224.14px;font-size:12px;line-height:12px;color:#222;font-weight:normal;-webkit-text-stroke:0.25px #222;">Juárez</div>
<div style="position:absolute;left:8px;top:254px;width:22px;height:1px;background:#c9c9c9;"></div>
<div style="position:absolute;left:30px;top:254px;width:1250px;height:1px;background:#d9d9d9;"></div>
<div class="t" style="left:-280.50px;width:600px;text-align:center;top:242.27px;font-size:11.5px;line-height:11.5px;color:#333;font-weight:normal;-webkit-text-stroke:0.25px #333;">27</div>
<div class="t" style="left:-515.50px;width:600px;text-align:right;top:242.14px;font-size:12px;line-height:12px;color:#222;font-weight:normal;-webkit-text-stroke:0.25px #222;"><span class="d" style="width:24.24px">3484</span></div>
<div class="t" style="left:89.50px;top:242.14px;font-size:12px;line-height:12px;color:#222;font-weight:normal;-webkit-text-stroke:0.25px #222;">Valerie</div>
<div class="t" style="left:231.50px;top:242.14px;font-size:12px;line-height:12px;color:#222;font-weight:normal;-webkit-text-stroke:0.25px #222;">Dominguez</div>
<div class="t" style="left:-150.50px;width:600px;text-align:right;top:242.14px;font-size:12px;line-height:12px;color:#222;font-weight:normal;-webkit-text-stroke:0.25px #222;"><span class="d" style="width:6.06px">9</span><span class="sl">/</span><span class="d" style="width:6.06px">5</span><span class="sl">/</span><span class="d" style="width:24.24px">2015</span></div>
<div class="t" style="left:-77.50px;width:600px;text-align:right;top:242.14px;font-size:12px;line-height:12px;color:#222;font-weight:normal;-webkit-text-stroke:0.25px #222;"><span class="d" style="width:6.06px">9</span><span class="sl">/</span><span class="d" style="width:6.06px">8</span><span class="sl">/</span><span class="d" style="width:24.24px">2015</span></div>
<div class="t" style="left:527.50px;top:242.14px;font-size:12px;line-height:12px;color:#222;font-weight:normal;-webkit-text-stroke:0.25px #222;">MX-<span class="d" style="width:24.24px">2015</span>-VD<span class="d" style="width:42.42px">2167039</span>-<span class="d" style="width:30.30px">42252</span></div>
<div class="t" style="left:693.50px;top:242.14px;font-size:12px;line-height:12px;color:#222;font-weight:normal;-webkit-text-stroke:0.25px #222;">First Class</div>
<div class="t" style="left:780.50px;top:242.14px;font-size:12px;line-height:12px;color:#222;font-weight:normal;-webkit-text-stroke:0.25px #222;">VD</div>
<div class="t" style="left:354.50px;width:600px;text-align:right;top:242.14px;font-size:12px;line-height:12px;color:#222;font-weight:normal;-webkit-text-stroke:0.25px #222;"><span class="d" style="width:42.42px">2167039</span></div>
<div class="t" style="left:959.50px;top:242.14px;font-size:12px;line-height:12px;color:#222;font-weight:normal;-webkit-text-stroke:0.25px #222;">Consumer</div>
<div class="t" style="left:1107.50px;top:242.14px;font-size:12px;line-height:12px;color:#222;font-weight:normal;-webkit-text-stroke:0.25px #222;">Soyapango</div>
<div style="position:absolute;left:8px;top:272px;width:22px;height:1px;background:#c9c9c9;"></div>
<div style="position:absolute;left:30px;top:272px;width:1250px;height:1px;background:#d9d9d9;"></div>
<div class="t" style="left:-280.50px;width:600px;text-align:center;top:259.27px;font-size:11.5px;line-height:11.5px;color:#333;font-weight:normal;-webkit-text-stroke:0.25px #333;">28</div>
<div class="t" style="left:-515.50px;width:600px;text-align:right;top:259.14px;font-size:12px;line-height:12px;color:#222;font-weight:normal;-webkit-text-stroke:0.25px #222;"><span class="d" style="width:30.30px">30191</span></div>
<div class="t" style="left:89.50px;top:259.14px;font-size:12px;line-height:12px;color:#222;font-weight:normal;-webkit-text-stroke:0.25px #222;">Phillip</div>
<div class="t" style="left:231.50px;top:259.14px;font-size:12px;line-height:12px;color:#222;font-weight:normal;-webkit-text-stroke:0.25px #222;">Breyer</div>
<div class="t" style="left:-150.50px;width:600px;text-align:right;top:259.14px;font-size:12px;line-height:12px;color:#222;font-weight:normal;-webkit-text-stroke:0.25px #222;"><span class="d" style="width:12.12px">12</span><span class="sl">/</span><span class="d" style="width:12.12px">16</span><span class="sl">/</span><span class="d" style="width:24.24px">2012</span></div>
<div class="t" style="left:-77.50px;width:600px;text-align:right;top:259.14px;font-size:12px;line-height:12px;color:#222;font-weight:normal;-webkit-text-stroke:0.25px #222;"><span class="d" style="width:12.12px">12</span><span class="sl">/</span><span class="d" style="width:12.12px">19</span><span class="sl">/</span><span class="d" style="width:24.24px">2012</span></div>
<div class="t" style="left:527.50px;top:259.14px;font-size:12px;line-height:12px;color:#222;font-weight:normal;-webkit-text-stroke:0.25px #222;">IN-<span class="d" style="width:24.24px">2012</span>-PB<span class="d" style="width:48.48px">19210127</span>-<span class="d" style="width:30.30px">41259</span></div>
<div class="t" style="left:693.50px;top:259.14px;font-size:12px;line-height:12px;color:#222;font-weight:normal;-webkit-text-stroke:0.25px #222;">First Class</div>
<div class="t" style="left:780.50px;top:259.14px;font-size:12px;line-height:12px;color:#222;font-weight:normal;-webkit-text-stroke:0.25px #222;">PB</div>
<div class="t" style="left:354.50px;width:600px;text-align:right;top:259.14px;font-size:12px;line-height:12px;color:#222;font-weight:normal;-webkit-text-stroke:0.25px #222;"><span class="d" style="width:48.48px">19210127</span></div>
<div class="t" style="left:959.50px;top:259.14px;font-size:12px;line-height:12px;color:#222;font-weight:normal;-webkit-text-stroke:0.25px #222;">Corporate</div>
<div class="t" style="left:1107.50px;top:259.14px;font-size:12px;line-height:12px;color:#222;font-weight:normal;-webkit-text-stroke:0.25px #222;">Taipei</div>
<div style="position:absolute;left:8px;top:290px;width:22px;height:1px;background:#c9c9c9;"></div>
<div style="position:absolute;left:30px;top:290px;width:1250px;height:1px;background:#d9d9d9;"></div>
<div class="t" style="left:-280.50px;width:600px;text-align:center;top:277.27px;font-size:11.5px;line-height:11.5px;color:#333;font-weight:normal;-webkit-text-stroke:0.25px #333;">29</div>
<div class="t" style="left:-515.50px;width:600px;text-align:right;top:277.14px;font-size:12px;line-height:12px;color:#222;font-weight:normal;-webkit-text-stroke:0.25px #222;"><span class="d" style="width:29.49px">11645</span></div>
<div class="t" style="left:89.50px;top:277.14px;font-size:12px;line-height:12px;color:#222;font-weight:normal;-webkit-text-stroke:0.25px #222;">Eugene</div>
<div class="t" style="left:231.50px;top:277.14px;font-size:12px;line-height:12px;color:#222;font-weight:normal;-webkit-text-stroke:0.25px #222;">Barchas</div>
<div class="t" style="left:-150.50px;width:600px;text-align:right;top:277.14px;font-size:12px;line-height:12px;color:#222;font-weight:normal;-webkit-text-stroke:0.25px #222;"><span class="d" style="width:6.06px">3</span><span class="sl">/</span><span class="d" style="width:12.12px">13</span><span class="sl">/</span><span class="d" style="width:24.24px">2012</span></div>
<div class="t" style="left:-77.50px;width:600px;text-align:right;top:277.14px;font-size:12px;line-height:12px;color:#222;font-weight:normal;-webkit-text-stroke:0.25px #222;"><span class="d" style="width:6.06px">3</span><span class="sl">/</span><span class="d" style="width:12.12px">16</span><span class="sl">/</span><span class="d" style="width:24.24px">2012</span></div>
<div class="t" style="left:527.50px;top:277.14px;font-size:12px;line-height:12px;color:#222;font-weight:normal;-webkit-text-stroke:0.25px #222;">ES-<span class="d" style="width:24.24px">2012</span>-EB<span class="d" style="width:41.61px">1411048</span>-<span class="d" style="width:30.30px">40981</span></div>
<div class="t" style="left:693.50px;top:277.14px;font-size:12px;line-height:12px;color:#222;font-weight:normal;-webkit-text-stroke:0.25px #222;">Second Class</div>
<div class="t" style="left:780.50px;top:277.14px;font-size:12px;line-height:12px;color:#222;font-weight:normal;-webkit-text-stroke:0.25px #222;">EB</div>
<div class="t" style="left:354.50px;width:600px;text-align:right;top:277.14px;font-size:12px;line-height:12px;color:#222;font-weight:normal;-webkit-text-stroke:0.25px #222;"><span class="d" style="width:41.61px">1411048</span></div>
<div class="t" style="left:959.50px;top:277.14px;font-size:12px;line-height:12px;color:#222;font-weight:normal;-webkit-text-stroke:0.25px #222;">Consumer</div>
<div class="t" style="left:1107.50px;top:277.14px;font-size:12px;line-height:12px;color:#222;font-weight:normal;-webkit-text-stroke:0.25px #222;">Leipzig</div>
<div style="position:absolute;left:8px;top:308px;width:22px;height:1px;background:#c9c9c9;"></div>
<div style="position:absolute;left:30px;top:308px;width:1250px;height:1px;background:#d9d9d9;"></div>
<div class="t" style="left:-280.50px;width:600px;text-align:center;top:295.27px;font-size:11.5px;line-height:11.5px;color:#333;font-weight:normal;-webkit-text-stroke:0.25px #333;">30</div>
<div class="t" style="left:-515.50px;width:600px;text-align:right;top:295.14px;font-size:12px;line-height:12px;color:#222;font-weight:normal;-webkit-text-stroke:0.25px #222;"><span class="d" style="width:30.30px">38460</span></div>
<div class="t" style="left:89.50px;top:295.14px;font-size:12px;line-height:12px;color:#222;font-weight:normal;-webkit-text-stroke:0.25px #222;">Aaron</div>
<div class="t" style="left:231.50px;top:295.14px;font-size:12px;line-height:12px;color:#222;font-weight:normal;-webkit-text-stroke:0.25px #222;">Hawkins</div>
<div class="t" style="left:-150.50px;width:600px;text-align:right;top:295.14px;font-size:12px;line-height:12px;color:#222;font-weight:normal;-webkit-text-stroke:0.25px #222;"><span class="d" style="width:6.06px">4</span><span class="sl">/</span><span class="d" style="width:12.12px">21</span><span class="sl">/</span><span class="d" style="width:24.24px">2012</span></div>
<div class="t" style="left:-77.50px;width:600px;text-align:right;top:295.14px;font-size:12px;line-height:12px;color:#222;font-weight:normal;-webkit-text-stroke:0.25px #222;"><span class="d" style="width:6.06px">4</span><span class="sl">/</span><span class="d" style="width:12.12px">23</span><span class="sl">/</span><span class="d" style="width:24.24px">2012</span></div>
<div class="t" style="left:527.50px;top:295.14px;font-size:12px;line-height:12px;color:#222;font-weight:normal;-webkit-text-stroke:0.25px #222;">CA-<span class="d" style="width:24.24px">2012</span>-AH<span class="d" style="width:48.48px">10030140</span>-<span class="d" style="width:30.30px">41020</span></div>
<div class="t" style="left:693.50px;top:295.14px;font-size:12px;line-height:12px;color:#222;font-weight:normal;-webkit-text-stroke:0.25px #222;">Second Class</div>
<div class="t" style="left:780.50px;top:295.14px;font-size:12px;line-height:12px;color:#222;font-weight:normal;-webkit-text-stroke:0.25px #222;">AH</div>
<div class="t" style="left:354.50px;width:600px;text-align:right;top:295.14px;font-size:12px;line-height:12px;color:#222;font-weight:normal;-webkit-text-stroke:0.25px #222;"><span class="d" style="width:54.54px">100301406</span></div>
<div class="t" style="left:959.50px;top:295.14px;font-size:12px;line-height:12px;color:#222;font-weight:normal;-webkit-text-stroke:0.25px #222;">Corporate</div>
<div class="t" style="left:502.50px;width:600px;text-align:right;top:295.14px;font-size:12px;line-height:12px;color:#222;font-weight:normal;-webkit-text-stroke:0.25px #222;"><span class="d" style="width:30.30px">12180</span></div>
<div class="t" style="left:1107.50px;top:295.14px;font-size:12px;line-height:12px;color:#222;font-weight:normal;-webkit-text-stroke:0.25px #222;">Troy</div>
<div style="position:absolute;left:8px;top:326px;width:22px;height:1px;background:#c9c9c9;"></div>
<div style="position:absolute;left:30px;top:326px;width:1250px;height:1px;background:#d9d9d9;"></div>
<div class="t" style="left:-280.50px;width:600px;text-align:center;top:313.27px;font-size:11.5px;line-height:11.5px;color:#333;font-weight:normal;-webkit-text-stroke:0.25px #333;">31</div>
<div class="t" style="left:-515.50px;width:600px;text-align:right;top:313.14px;font-size:12px;line-height:12px;color:#222;font-weight:normal;-webkit-text-stroke:0.25px #222;"><span class="d" style="width:30.30px">22999</span></div>
<div class="t" style="left:89.50px;top:313.14px;font-size:12px;line-height:12px;color:#222;font-weight:normal;-webkit-text-stroke:0.25px #222;">Benjamin</div>
<div class="t" style="left:231.50px;top:313.14px;font-size:12px;line-height:12px;color:#222;font-weight:normal;-webkit-text-stroke:0.25px #222;">Patterson</div>
<div class="t" style="left:-150.50px;width:600px;text-align:right;top:313.14px;font-size:12px;line-height:12px;color:#222;font-weight:normal;-webkit-text-stroke:0.25px #222;"><span class="d" style="width:6.06px">2</span><span class="sl">/</span><span class="d" style="width:12.12px">24</span><span class="sl">/</span><span class="d" style="width:24.24px">2013</span></div>
<div class="t" style="left:-77.50px;width:600px;text-align:right;top:313.14px;font-size:12px;line-height:12px;color:#222;font-weight:normal;-webkit-text-stroke:0.25px #222;"><span class="d" style="width:6.06px">2</span><span class="sl">/</span><span class="d" style="width:12.12px">24</span><span class="sl">/</span><span class="d" style="width:24.24px">2013</span></div>
<div class="t" style="left:527.50px;top:313.14px;font-size:12px;line-height:12px;color:#222;font-weight:normal;-webkit-text-stroke:0.25px #222;">IN-<span class="d" style="width:24.24px">2013</span>-BP<span class="d" style="width:41.61px">1123058</span>-<span class="d" style="width:30.30px">41329</span></div>
<div class="t" style="left:693.50px;top:313.14px;font-size:12px;line-height:12px;color:#222;font-weight:normal;-webkit-text-stroke:0.25px #222;">Same Day</div>
<div class="t" style="left:780.50px;top:313.14px;font-size:12px;line-height:12px;color:#222;font-weight:normal;-webkit-text-stroke:0.25px #222;">BP</div>
<div class="t" style="left:354.50px;width:600px;text-align:right;top:313.14px;font-size:12px;line-height:12px;color:#222;font-weight:normal;-webkit-text-stroke:0.25px #222;"><span class="d" style="width:41.61px">1123058</span></div>
<div class="t" style="left:959.50px;top:313.14px;font-size:12px;line-height:12px;color:#222;font-weight:normal;-webkit-text-stroke:0.25px #222;">Consumer</div>
<div class="t" style="left:1107.50px;top:313.14px;font-size:12px;line-height:12px;color:#222;font-weight:normal;-webkit-text-stroke:0.25px #222;">Surat</div>
<div style="position:absolute;left:8px;top:344px;width:22px;height:1px;background:#c9c9c9;"></div>
<div style="position:absolute;left:30px;top:344px;width:1250px;height:1px;background:#d9d9d9;"></div>
<div class="t" style="left:-280.50px;width:600px;text-align:center;top:331.27px;font-size:11.5px;line-height:11.5px;color:#333;font-weight:normal;-webkit-text-stroke:0.25px #333;">32</div>
<div class="t" style="left:-515.50px;width:600px;text-align:right;top:331.14px;font-size:12px;line-height:12px;color:#222;font-weight:normal;-webkit-text-stroke:0.25px #222;"><span class="d" style="width:18.18px">220</span></div>
<div class="t" style="left:89.50px;top:331.14px;font-size:12px;line-height:12px;color:#222;font-weight:normal;-webkit-text-stroke:0.25px #222;">Rick</div>
<div class="t" style="left:231.50px;top:331.14px;font-size:12px;line-height:12px;color:#222;font-weight:normal;-webkit-text-stroke:0.25px #222;">Reed</div>
<div class="t" style="left:-150.50px;width:600px;text-align:right;top:331.14px;font-size:12px;line-height:12px;color:#222;font-weight:normal;-webkit-text-stroke:0.25px #222;"><span class="d" style="width:12.12px">12</span><span class="sl">/</span><span class="d" style="width:12.12px">27</span><span class="sl">/</span><span class="d" style="width:24.24px">2012</span></div>
<div class="t" style="left:-77.50px;width:600px;text-align:right;top:331.14px;font-size:12px;line-height:12px;color:#222;font-weight:normal;-webkit-text-stroke:0.25px #222;"><span class="d" style="width:12.12px">12</span><span class="sl">/</span><span class="d" style="width:12.12px">29</span><span class="sl">/</span><span class="d" style="width:24.24px">2012</span></div>
<div class="t" style="left:527.50px;top:331.14px;font-size:12px;line-height:12px;color:#222;font-weight:normal;-webkit-text-stroke:0.25px #222;">US-<span class="d" style="width:24.24px">2012</span>-RR<span class="d" style="width:42.42px">1952536</span>-<span class="d" style="width:30.30px">41270</span></div>
<div class="t" style="left:693.50px;top:331.14px;font-size:12px;line-height:12px;color:#222;font-weight:normal;-webkit-text-stroke:0.25px #222;">Second Class</div>
<div class="t" style="left:780.50px;top:331.14px;font-size:12px;line-height:12px;color:#222;font-weight:normal;-webkit-text-stroke:0.25px #222;">RR</div>
<div class="t" style="left:354.50px;width:600px;text-align:right;top:331.14px;font-size:12px;line-height:12px;color:#222;font-weight:normal;-webkit-text-stroke:0.25px #222;"><span class="d" style="width:42.42px">1952536</span></div>
<div class="t" style="left:959.50px;top:331.14px;font-size:12px;line-height:12px;color:#222;font-weight:normal;-webkit-text-stroke:0.25px #222;">Corporate</div>
<div class="t" style="left:1107.50px;top:331.14px;font-size:12px;line-height:12px;color:#222;font-weight:normal;-webkit-text-stroke:0.25px #222;">Santo Domingo</div>
<div style="position:absolute;left:8px;top:362px;width:22px;height:1px;background:#c9c9c9;"></div>
<div style="position:absolute;left:30px;top:362px;width:1250px;height:1px;background:#d9d9d9;"></div>
<div class="t" style="left:-280.50px;width:600px;text-align:center;top:349.27px;font-size:11.5px;line-height:11.5px;color:#333;font-weight:normal;-webkit-text-stroke:0.25px #333;">33</div>
<div class="t" style="left:-515.50px;width:600px;text-align:right;top:349.14px;font-size:12px;line-height:12px;color:#222;font-weight:normal;-webkit-text-stroke:0.25px #222;"><span class="d" style="width:30.30px">10648</span></div>
<div class="t" style="left:89.50px;top:349.14px;font-size:12px;line-height:12px;color:#222;font-weight:normal;-webkit-text-stroke:0.25px #222;">Bill</div>
<div class="t" style="left:231.50px;top:349.14px;font-size:12px;line-height:12px;color:#222;font-weight:normal;-webkit-text-stroke:0.25px #222;">Shonely</div>
<div class="t" style="left:-150.50px;width:600px;text-align:right;top:349.14px;font-size:12px;line-height:12px;color:#222;font-weight:normal;-webkit-text-stroke:0.25px #222;"><span class="d" style="width:6.06px">7</span><span class="sl">/</span><span class="d" style="width:12.12px">17</span><span class="sl">/</span><span class="d" style="width:24.24px">2013</span></div>
<div class="t" style="left:-77.50px;width:600px;text-align:right;top:349.14px;font-size:12px;line-height:12px;color:#222;font-weight:normal;-webkit-text-stroke:0.25px #222;"><span class="d" style="width:6.06px">7</span><span class="sl">/</span><span class="d" style="width:12.12px">19</span><span class="sl">/</span><span class="d" style="width:24.24px">2013</span></div>
<div class="t" style="left:527.50px;top:349.14px;font-size:12px;line-height:12px;color:#222;font-weight:normal;-webkit-text-stroke:0.25px #222;">ES-<span class="d" style="width:24.24px">2013</span>-BS<span class="d" style="width:41.61px">1136545</span>-<span class="d" style="width:30.30px">41472</span></div>
<div class="t" style="left:693.50px;top:349.14px;font-size:12px;line-height:12px;color:#222;font-weight:normal;-webkit-text-stroke:0.25px #222;">First Class</div>
<div class="t" style="left:780.50px;top:349.14px;font-size:12px;line-height:12px;color:#222;font-weight:normal;-webkit-text-stroke:0.25px #222;">BS</div>
<div class="t" style="left:354.50px;width:600px;text-align:right;top:349.14px;font-size:12px;line-height:12px;color:#222;font-weight:normal;-webkit-text-stroke:0.25px #222;"><span class="d" style="width:41.61px">1136545</span></div>
<div class="t" style="left:959.50px;top:349.14px;font-size:12px;line-height:12px;color:#222;font-weight:normal;-webkit-text-stroke:0.25px #222;">Corporate</div>
<div class="t" style="left:1107.50px;top:349.14px;font-size:12px;line-height:12px;color:#222;font-weight:normal;-webkit-text-stroke:0.25px #222;">Saint-Brieuc</div>
<div style="position:absolute;left:8px;top:379px;width:22px;height:1px;background:#c9c9c9;"></div>
<div style="position:absolute;left:30px;top:379px;width:1250px;height:1px;background:#d9d9d9;"></div>
<div class="t" style="left:-280.50px;width:600px;text-align:center;top:367.27px;font-size:11.5px;line-height:11.5px;color:#333;font-weight:normal;-webkit-text-stroke:0.25px #333;">34</div>
<div class="t" style="left:-515.50px;width:600px;text-align:right;top:367.14px;font-size:12px;line-height:12px;color:#222;font-weight:normal;-webkit-text-stroke:0.25px #222;"><span class="d" style="width:30.30px">40977</span></div>
<div class="t" style="left:89.50px;top:367.14px;font-size:12px;line-height:12px;color:#222;font-weight:normal;-webkit-text-stroke:0.25px #222;">Aaron</div>
<div class="t" style="left:231.50px;top:367.14px;font-size:12px;line-height:12px;color:#222;font-weight:normal;-webkit-text-stroke:0.25px #222;">Hawkins</div>
<div class="t" style="left:-150.50px;width:600px;text-align:right;top:367.14px;font-size:12px;line-height:12px;color:#222;font-weight:normal;-webkit-text-stroke:0.25px #222;"><span class="d" style="width:12.12px">12</span><span class="sl">/</span><span class="d" style="width:12.12px">27</span><span class="sl">/</span><span class="d" style="width:24.24px">2013</span></div>
<div class="t" style="left:-77.50px;width:600px;text-align:right;top:367.14px;font-size:12px;line-height:12px;color:#222;font-weight:normal;-webkit-text-stroke:0.25px #222;"><span class="d" style="width:12.12px">12</span><span class="sl">/</span><span class="d" style="width:12.12px">31</span><span class="sl">/</span><span class="d" style="width:24.24px">2013</span></div>
<div class="t" style="left:527.50px;top:367.14px;font-size:12px;line-height:12px;color:#222;font-weight:normal;-webkit-text-stroke:0.25px #222;">CA-<span class="d" style="width:24.24px">2013</span>-AH<span class="d" style="width:48.48px">10030140</span>-<span class="d" style="width:30.30px">41635</span></div>
<div class="t" style="left:693.50px;top:367.14px;font-size:12px;line-height:12px;color:#222;font-weight:normal;-webkit-text-stroke:0.25px #222;">Standard Class</div>
<div class="t" style="left:780.50px;top:367.14px;font-size:12px;line-height:12px;color:#222;font-weight:normal;-webkit-text-stroke:0.25px #222;">AH</div>
<div class="t" style="left:354.50px;width:600px;text-align:right;top:367.14px;font-size:12px;line-height:12px;color:#222;font-weight:normal;-webkit-text-stroke:0.25px #222;"><span class="d" style="width:54.54px">100301404</span></div>
<div class="t" style="left:959.50px;top:367.14px;font-size:12px;line-height:12px;color:#222;font-weight:normal;-webkit-text-stroke:0.25px #222;">Corporate</div>
<div class="t" style="left:502.50px;width:600px;text-align:right;top:367.14px;font-size:12px;line-height:12px;color:#222;font-weight:normal;-webkit-text-stroke:0.25px #222;"><span class="d" style="width:30.30px">94122</span></div>
<div class="t" style="left:1107.50px;top:367.14px;font-size:12px;line-height:12px;color:#222;font-weight:normal;-webkit-text-stroke:0.25px #222;">San Francisco</div>
<div style="position:absolute;left:8px;top:397px;width:22px;height:1px;background:#c9c9c9;"></div>
<div style="position:absolute;left:30px;top:397px;width:1250px;height:1px;background:#d9d9d9;"></div>
<div class="t" style="left:-280.50px;width:600px;text-align:center;top:384.27px;font-size:11.5px;line-height:11.5px;color:#333;font-weight:normal;-webkit-text-stroke:0.25px #333;">35</div>
<div class="t" style="left:-515.50px;width:600px;text-align:right;top:384.14px;font-size:12px;line-height:12px;color:#222;font-weight:normal;-webkit-text-stroke:0.25px #222;"><span class="d" style="width:30.30px">21286</span></div>
<div class="t" style="left:89.50px;top:384.14px;font-size:12px;line-height:12px;color:#222;font-weight:normal;-webkit-text-stroke:0.25px #222;">Dave</div>
<div class="t" style="left:231.50px;top:384.14px;font-size:12px;line-height:12px;color:#222;font-weight:normal;-webkit-text-stroke:0.25px #222;">Poirier</div>
<div class="t" style="left:-150.50px;width:600px;text-align:right;top:384.14px;font-size:12px;line-height:12px;color:#222;font-weight:normal;-webkit-text-stroke:0.25px #222;"><span class="d" style="width:11.31px">11</span><span class="sl">/</span><span class="d" style="width:6.06px">2</span><span class="sl">/</span><span class="d" style="width:24.24px">2012</span></div>
<div class="t" style="left:-77.50px;width:600px;text-align:right;top:384.14px;font-size:12px;line-height:12px;color:#222;font-weight:normal;-webkit-text-stroke:0.25px #222;"><span class="d" style="width:11.31px">11</span><span class="sl">/</span><span class="d" style="width:6.06px">4</span><span class="sl">/</span><span class="d" style="width:24.24px">2012</span></div>
<div class="t" style="left:527.50px;top:384.14px;font-size:12px;line-height:12px;color:#222;font-weight:normal;-webkit-text-stroke:0.25px #222;">IN-<span class="d" style="width:24.24px">2012</span>-DP<span class="d" style="width:36.36px">131057</span>-<span class="d" style="width:30.30px">41215</span></div>
<div class="t" style="left:693.50px;top:384.14px;font-size:12px;line-height:12px;color:#222;font-weight:normal;-webkit-text-stroke:0.25px #222;">Second Class</div>
<div class="t" style="left:780.50px;top:384.14px;font-size:12px;line-height:12px;color:#222;font-weight:normal;-webkit-text-stroke:0.25px #222;">DP</div>
<div class="t" style="left:354.50px;width:600px;text-align:right;top:384.14px;font-size:12px;line-height:12px;color:#222;font-weight:normal;-webkit-text-stroke:0.25px #222;"><span class="d" style="width:36.36px">131057</span></div>
<div class="t" style="left:959.50px;top:384.14px;font-size:12px;line-height:12px;color:#222;font-weight:normal;-webkit-text-stroke:0.25px #222;">Corporate</div>
<div class="t" style="left:1107.50px;top:384.14px;font-size:12px;line-height:12px;color:#222;font-weight:normal;-webkit-text-stroke:0.25px #222;">Gold Coast</div>
<div style="position:absolute;left:8px;top:415px;width:22px;height:1px;background:#c9c9c9;"></div>
<div style="position:absolute;left:30px;top:415px;width:1250px;height:1px;background:#d9d9d9;"></div>
<div class="t" style="left:-280.50px;width:600px;text-align:center;top:402.27px;font-size:11.5px;line-height:11.5px;color:#333;font-weight:normal;-webkit-text-stroke:0.25px #333;">36</div>
<div class="t" style="left:-515.50px;width:600px;text-align:right;top:402.14px;font-size:12px;line-height:12px;color:#222;font-weight:normal;-webkit-text-stroke:0.25px #222;"><span class="d" style="width:30.30px">40976</span></div>
<div class="t" style="left:89.50px;top:402.14px;font-size:12px;line-height:12px;color:#222;font-weight:normal;-webkit-text-stroke:0.25px #222;">Aaron</div>
<div class="t" style="left:231.50px;top:402.14px;font-size:12px;line-height:12px;color:#222;font-weight:normal;-webkit-text-stroke:0.25px #222;">Hawkins</div>
<div class="t" style="left:-150.50px;width:600px;text-align:right;top:402.14px;font-size:12px;line-height:12px;color:#222;font-weight:normal;-webkit-text-stroke:0.25px #222;"><span class="d" style="width:12.12px">12</span><span class="sl">/</span><span class="d" style="width:12.12px">27</span><span class="sl">/</span><span class="d" style="width:24.24px">2013</span></div>
<div class="t" style="left:-77.50px;width:600px;text-align:right;top:402.14px;font-size:12px;line-height:12px;color:#222;font-weight:normal;-webkit-text-stroke:0.25px #222;"><span class="d" style="width:12.12px">12</span><span class="sl">/</span><span class="d" style="width:12.12px">31</span><span class="sl">/</span><span class="d" style="width:24.24px">2013</span></div>
<div class="t" style="left:527.50px;top:402.14px;font-size:12px;line-height:12px;color:#222;font-weight:normal;-webkit-text-stroke:0.25px #222;">CA-<span class="d" style="width:24.24px">2013</span>-AH<span class="d" style="width:48.48px">10030140</span>-<span class="d" style="width:30.30px">41635</span></div>
<div class="t" style="left:693.50px;top:402.14px;font-size:12px;line-height:12px;color:#222;font-weight:normal;-webkit-text-stroke:0.25px #222;">Standard Class</div>
<div class="t" style="left:780.50px;top:402.14px;font-size:12px;line-height:12px;color:#222;font-weight:normal;-webkit-text-stroke:0.25px #222;">AH</div>
<div class="t" style="left:354.50px;width:600px;text-align:right;top:402.14px;font-size:12px;line-height:12px;color:#222;font-weight:normal;-webkit-text-stroke:0.25px #222;"><span class="d" style="width:54.54px">100301404</span></div>
<div class="t" style="left:959.50px;top:402.14px;font-size:12px;line-height:12px;color:#222;font-weight:normal;-webkit-text-stroke:0.25px #222;">Corporate</div>
<div class="t" style="left:502.50px;width:600px;text-align:right;top:402.14px;font-size:12px;line-height:12px;color:#222;font-weight:normal;-webkit-text-stroke:0.25px #222;"><span class="d" style="width:30.30px">94122</span></div>
<div class="t" style="left:1107.50px;top:402.14px;font-size:12px;line-height:12px;color:#222;font-weight:normal;-webkit-text-stroke:0.25px #222;">San Francisco</div>
<div style="position:absolute;left:8px;top:433px;width:22px;height:1px;background:#c9c9c9;"></div>
<div style="position:absolute;left:30px;top:433px;width:1250px;height:1px;background:#d9d9d9;"></div>
<div class="t" style="left:-280.50px;width:600px;text-align:center;top:420.27px;font-size:11.5px;line-height:11.5px;color:#333;font-weight:normal;-webkit-text-stroke:0.25px #333;">37</div>
<div class="t" style="left:-515.50px;width:600px;text-align:right;top:420.14px;font-size:12px;line-height:12px;color:#222;font-weight:normal;-webkit-text-stroke:0.25px #222;"><span class="d" style="width:30.30px">47905</span></div>
<div class="t" style="left:89.50px;top:420.14px;font-size:12px;line-height:12px;color:#222;font-weight:normal;-webkit-text-stroke:0.25px #222;">Aaron</div>
<div class="t" style="left:231.50px;top:420.14px;font-size:12px;line-height:12px;color:#222;font-weight:normal;-webkit-text-stroke:0.25px #222;">Hawkins</div>
<div class="t" style="left:-150.50px;width:600px;text-align:right;top:420.14px;font-size:12px;line-height:12px;color:#222;font-weight:normal;-webkit-text-stroke:0.25px #222;"><span class="d" style="width:6.06px">9</span><span class="sl">/</span><span class="d" style="width:12.12px">13</span><span class="sl">/</span><span class="d" style="width:24.24px">2012</span></div>
<div class="t" style="left:-77.50px;width:600px;text-align:right;top:420.14px;font-size:12px;line-height:12px;color:#222;font-weight:normal;-webkit-text-stroke:0.25px #222;"><span class="d" style="width:6.06px">9</span><span class="sl">/</span><span class="d" style="width:12.12px">14</span><span class="sl">/</span><span class="d" style="width:24.24px">2012</span></div>
<div class="t" style="left:527.50px;top:420.14px;font-size:12px;line-height:12px;color:#222;font-weight:normal;-webkit-text-stroke:0.25px #222;">CG-<span class="d" style="width:24.24px">2012</span>-AH<span class="d" style="width:42.42px">1003033</span>-<span class="d" style="width:29.49px">41165</span></div>
<div class="t" style="left:693.50px;top:420.14px;font-size:12px;line-height:12px;color:#222;font-weight:normal;-webkit-text-stroke:0.25px #222;">First Class</div>
<div class="t" style="left:780.50px;top:420.14px;font-size:12px;line-height:12px;color:#222;font-weight:normal;-webkit-text-stroke:0.25px #222;">AH</div>
<div class="t" style="left:354.50px;width:600px;text-align:right;top:420.14px;font-size:12px;line-height:12px;color:#222;font-weight:normal;-webkit-text-stroke:0.25px #222;"><span class="d" style="width:42.42px">1003033</span></div>
<div class="t" style="left:959.50px;top:420.14px;font-size:12px;line-height:12px;color:#222;font-weight:normal;-webkit-text-stroke:0.25px #222;">Corporate</div>
<div class="t" style="left:1107.50px;top:420.14px;font-size:12px;line-height:12px;color:#222;font-weight:normal;-webkit-text-stroke:0.25px #222;">Kamina</div>
<div style="position:absolute;left:8px;top:451px;width:22px;height:1px;background:#c9c9c9;"></div>
<div style="position:absolute;left:30px;top:451px;width:1250px;height:1px;background:#d9d9d9;"></div>
<div class="t" style="left:-280.50px;width:600px;text-align:center;top:438.27px;font-size:11.5px;line-height:11.5px;color:#333;font-weight:normal;-webkit-text-stroke:0.25px #333;">38</div>
<div class="t" style="left:-515.50px;width:600px;text-align:right;top:438.14px;font-size:12px;line-height:12px;color:#222;font-weight:normal;-webkit-text-stroke:0.25px #222;"><span class="d" style="width:30.30px">36651</span></div>
<div class="t" style="left:89.50px;top:438.14px;font-size:12px;line-height:12px;color:#222;font-weight:normal;-webkit-text-stroke:0.25px #222;">Aaron</div>
<div class="t" style="left:231.50px;top:438.14px;font-size:12px;line-height:12px;color:#222;font-weight:normal;-webkit-text-stroke:0.25px #222;">Hawkins</div>
<div class="t" style="left:-150.50px;width:600px;text-align:right;top:438.14px;font-size:12px;line-height:12px;color:#222;font-weight:normal;-webkit-text-stroke:0.25px #222;"><span class="d" style="width:6.06px">5</span><span class="sl">/</span><span class="d" style="width:12.12px">12</span><span class="sl">/</span><span class="d" style="width:24.24px">2012</span></div>
<div class="t" style="left:-77.50px;width:600px;text-align:right;top:438.14px;font-size:12px;line-height:12px;color:#222;font-weight:normal;-webkit-text-stroke:0.25px #222;"><span class="d" style="width:6.06px">5</span><span class="sl">/</span><span class="d" style="width:12.12px">18</span><span class="sl">/</span><span class="d" style="width:24.24px">2012</span></div>
<div class="t" style="left:527.50px;top:438.14px;font-size:12px;line-height:12px;color:#222;font-weight:normal;-webkit-text-stroke:0.25px #222;">CA-<span class="d" style="width:24.24px">2012</span>-AH<span class="d" style="width:48.48px">10030140</span>-<span class="d" style="width:30.30px">41041</span></div>
<div class="t" style="left:693.50px;top:438.14px;font-size:12px;line-height:12px;color:#222;font-weight:normal;-webkit-text-stroke:0.25px #222;">Standard Class</div>
<div class="t" style="left:780.50px;top:438.14px;font-size:12px;line-height:12px;color:#222;font-weight:normal;-webkit-text-stroke:0.25px #222;">AH</div>
<div class="t" style="left:354.50px;width:600px;text-align:right;top:438.14px;font-size:12px;line-height:12px;color:#222;font-weight:normal;-webkit-text-stroke:0.25px #222;"><span class="d" style="width:54.54px">100301404</span></div>
<div class="t" style="left:959.50px;top:438.14px;font-size:12px;line-height:12px;color:#222;font-weight:normal;-webkit-text-stroke:0.25px #222;">Corporate</div>
<div class="t" style="left:502.50px;width:600px;text-align:right;top:438.14px;font-size:12px;line-height:12px;color:#222;font-weight:normal;-webkit-text-stroke:0.25px #222;"><span class="d" style="width:30.30px">90004</span></div>
<div class="t" style="left:1107.50px;top:438.14px;font-size:12px;line-height:12px;color:#222;font-weight:normal;-webkit-text-stroke:0.25px #222;">Los Angeles</div>
<div style="position:absolute;left:8px;top:469px;width:22px;height:1px;background:#c9c9c9;"></div>
<div style="position:absolute;left:30px;top:469px;width:1250px;height:1px;background:#d9d9d9;"></div>
<div class="t" style="left:-280.50px;width:600px;text-align:center;top:456.27px;font-size:11.5px;line-height:11.5px;color:#333;font-weight:normal;-webkit-text-stroke:0.25px #333;">39</div>
<div class="t" style="left:-515.50px;width:600px;text-align:right;top:456.14px;font-size:12px;line-height:12px;color:#222;font-weight:normal;-webkit-text-stroke:0.25px #222;"><span class="d" style="width:30.30px">40100</span></div>
<div class="t" style="left:89.50px;top:456.14px;font-size:12px;line-height:12px;color:#222;font-weight:normal;-webkit-text-stroke:0.25px #222;">Aaron</div>
<div class="t" style="left:231.50px;top:456.14px;font-size:12px;line-height:12px;color:#222;font-weight:normal;-webkit-text-stroke:0.25px #222;">Hawkins</div>
<div class="t" style="left:-150.50px;width:600px;text-align:right;top:456.14px;font-size:12px;line-height:12px;color:#222;font-weight:normal;-webkit-text-stroke:0.25px #222;"><span class="d" style="width:12.12px">12</span><span class="sl">/</span><span class="d" style="width:12.12px">30</span><span class="sl">/</span><span class="d" style="width:24.24px">2012</span></div>
<div class="t" style="left:-77.50px;width:600px;text-align:right;top:456.14px;font-size:12px;line-height:12px;color:#222;font-weight:normal;-webkit-text-stroke:0.25px #222;"><span class="d" style="width:12.12px">12</span><span class="sl">/</span><span class="d" style="width:12.12px">31</span><span class="sl">/</span><span class="d" style="width:24.24px">2012</span></div>
<div class="t" style="left:527.50px;top:456.14px;font-size:12px;line-height:12px;color:#222;font-weight:normal;-webkit-text-stroke:0.25px #222;">CA-<span class="d" style="width:24.24px">2012</span>-AH<span class="d" style="width:48.48px">10030140</span>-<span class="d" style="width:30.30px">41273</span></div>
<div class="t" style="left:693.50px;top:456.14px;font-size:12px;line-height:12px;color:#222;font-weight:normal;-webkit-text-stroke:0.25px #222;">First Class</div>
<div class="t" style="left:780.50px;top:456.14px;font-size:12px;line-height:12px;color:#222;font-weight:normal;-webkit-text-stroke:0.25px #222;">AH</div>
<div class="t" style="left:354.50px;width:600px;text-align:right;top:456.14px;font-size:12px;line-height:12px;color:#222;font-weight:normal;-webkit-text-stroke:0.25px #222;"><span class="d" style="width:54.54px">100301406</span></div>
<div class="t" style="left:959.50px;top:456.14px;font-size:12px;line-height:12px;color:#222;font-weight:normal;-webkit-text-stroke:0.25px #222;">Corporate</div>
<div class="t" style="left:502.50px;width:600px;text-align:right;top:456.14px;font-size:12px;line-height:12px;color:#222;font-weight:normal;-webkit-text-stroke:0.25px #222;"><span class="d" style="width:30.30px">10035</span></div>
<div class="t" style="left:1107.50px;top:456.14px;font-size:12px;line-height:12px;color:#222;font-weight:normal;-webkit-text-stroke:0.25px #222;">New York City</div>
<div style="position:absolute;left:87px;top:202px;width:1px;height:261px;background:#d9d9d9;"></div>
<div style="position:absolute;left:229px;top:202px;width:1px;height:261px;background:#d9d9d9;"></div>
<div style="position:absolute;left:371px;top:202px;width:1px;height:261px;background:#d9d9d9;"></div>
<div style="position:absolute;left:452px;top:202px;width:1px;height:261px;background:#d9d9d9;"></div>
<div style="position:absolute;left:525px;top:202px;width:1px;height:261px;background:#d9d9d9;"></div>
<div style="position:absolute;left:691px;top:202px;width:1px;height:261px;background:#d9d9d9;"></div>
<div style="position:absolute;left:778px;top:202px;width:1px;height:261px;background:#d9d9d9;"></div>
<div style="position:absolute;left:868px;top:202px;width:1px;height:261px;background:#d9d9d9;"></div>
<div style="position:absolute;left:957px;top:202px;width:1px;height:261px;background:#d9d9d9;"></div>
<div style="position:absolute;left:1033px;top:202px;width:1px;height:261px;background:#d9d9d9;"></div>
<div style="position:absolute;left:1105px;top:202px;width:1px;height:261px;background:#d9d9d9;"></div>
<div style="position:absolute;left:30px;top:200px;width:1px;height:263px;background:#a9a9a9;"></div>
<div style="position:absolute;left:30px;top:200px;width:1250px;height:2px;background:#2c5e3c;"></div>
<div style="position:absolute;left:30px;top:202px;width:1250px;height:1px;background:#cfe3d6;"></div>
<div style="position:absolute;left:30px;top:202px;width:2px;height:17px;background:#2c5e3c;"></div>
<div style="position:absolute;left:30px;top:218px;width:5px;height:2px;background:#2c5e3c;"></div>
<div style="position:absolute;left:31px;top:176px;width:53px;height:15px;background:#c4c4c4;"></div>
<div style="position:absolute;left:32px;top:177px;width:51px;height:13px;background:#fff;"></div>
<div class="t" style="left:33.25px;top:179.13px;font-size:10px;line-height:10px;color:#454545;font-weight:normal;">Name Box</div>
<svg style="position:absolute;left:0;top:0;mix-blend-mode:multiply" width="1280" height="463"><path d="M0 198 L30 198 L160 199 L166 195.5 L190 195 L230 197 L255 200.5 L372 202 L376 205 L452 205 L455 212 L454 219 L449 224 L449 237 L300 238.5 L200 239.5 L150 241 L30 238 L8 238 L8 227 L2 227 L2 212.5 L0 212.5 Z" fill="#fafa1e"/></svg>
</body></html>
